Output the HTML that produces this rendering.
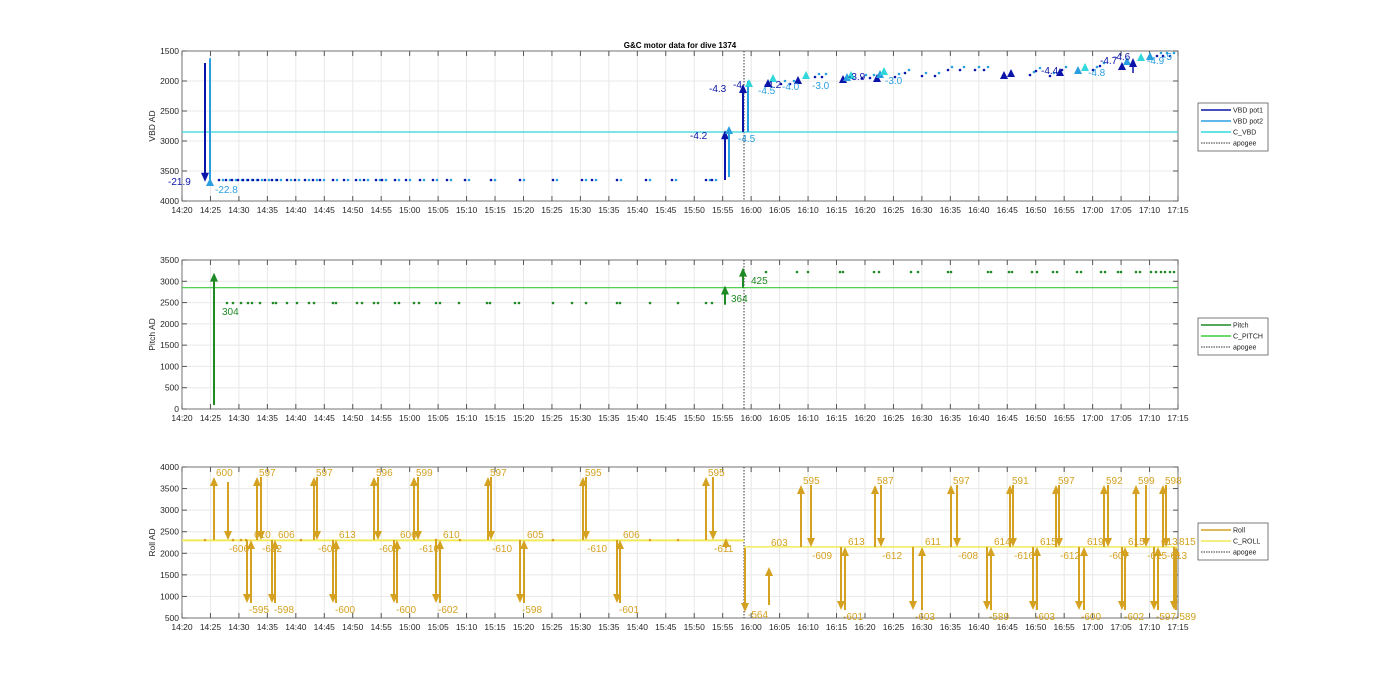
<!DOCTYPE html>
<html><head><meta charset="utf-8"><style>
html,body{margin:0;padding:0;background:#fff;width:1400px;height:693px;overflow:hidden}
svg{display:block;font-family:"Liberation Sans",Arial,sans-serif}
</style></head><body>
<svg id="s" width="1400" height="693" viewBox="0 0 1400 693" xmlns="http://www.w3.org/2000/svg">
<text x="680" y="48" font-size="8" font-weight="bold" text-anchor="middle" fill="#000">G&amp;C motor data for dive 1374</text>
</svg>
<script>
(function(){
const S=document.getElementById('s');const NS='http://www.w3.org/2000/svg';
function el(t,a,txt){const e=document.createElementNS(NS,t);for(const k in a)e.setAttribute(k,a[k]);if(txt!==undefined)e.textContent=txt;S.appendChild(e);return e;}
const X0=182,X1=1178;
const xt=m=>X0+m*(X1-X0)/175;
const labs=[];for(let m=0;m<=175;m+=5){const h=14+Math.floor((20+m)/60),mm=(20+m)%60;labs.push(h+':'+(mm<10?'0':'')+mm);}
function axes(tp,bt,ymin,ymax,step,ylab,rev){
  const yv=v=>rev?tp+(v-ymin)*(bt-tp)/(ymax-ymin):bt-(v-ymin)*(bt-tp)/(ymax-ymin);
  for(let m=0;m<=175;m+=5){const x=xt(m);el('line',{x1:x,y1:tp,x2:x,y2:bt,stroke:'#e8e8e8','stroke-width':1});}
  for(let v=ymin;v<=ymax;v+=step){const y=yv(v);el('line',{x1:X0,y1:y,x2:X1,y2:y,stroke:'#e8e8e8','stroke-width':1});
    el('text',{x:X0-3,y:y+3,'font-size':8.5,'text-anchor':'end',fill:'#262626'},String(v));
    el('line',{x1:X0,y1:y,x2:X0+5,y2:y,stroke:'#555'});el('line',{x1:X1,y1:y,x2:X1-5,y2:y,stroke:'#555'});}
  labs.forEach((l,i)=>{const x=xt(i*5);el('text',{x:x,y:bt+12,'font-size':8.5,'text-anchor':'middle',fill:'#262626'},l);
    el('line',{x1:x,y1:bt,x2:x,y2:bt-5,stroke:'#555'});el('line',{x1:x,y1:tp,x2:x,y2:tp+5,stroke:'#555'});});
  el('rect',{x:X0,y:tp,width:X1-X0,height:bt-tp,fill:'none',stroke:'#555','stroke-width':0.8});
  const cy=(tp+bt)/2;el('text',{x:0,y:0,'font-size':8.5,'text-anchor':'middle',fill:'#262626',transform:`translate(${X0-27},${cy}) rotate(-90)`},ylab);
  el('line',{x1:744,y1:tp,x2:744,y2:bt,stroke:'#333','stroke-width':1,'stroke-dasharray':'1.5,1.5'});
  return yv;
}
function arrow(x,y1,y2,c,w){w=w||2;const d=y2<y1?-1:1;el('line',{x1:x,y1:y1,x2:x,y2:y2-d*8,stroke:c,'stroke-width':w});
  el('polygon',{points:`${x-4},${y2-d*9} ${x+4},${y2-d*9} ${x},${y2}`,fill:c});}
function txt(x,y,s,c,fs){el('text',{x:x,y:y,'font-size':fs||10,fill:c},s);}
function dot(x,y,c){el('circle',{cx:x,cy:y,r:1.3,fill:c});}
function tri(x,y,c){el('polygon',{points:`${x-4},${y+3} ${x+4},${y+3} ${x},${y-5}`,fill:c});}
function legend(y,items){const h=items.length*11+4;el('rect',{x:1198,y:y,width:70,height:h,fill:'#fff',stroke:'#444','stroke-width':0.7});
  items.forEach((it,i)=>{const yy=y+7+i*11;el('line',{x1:1201,y1:yy,x2:1231,y2:yy,stroke:it[1],'stroke-width':it[2]?1:1.5,'stroke-dasharray':it[2]?'1.5,1':'none'});
  el('text',{x:1233,y:yy+2.5,'font-size':7,fill:'#222'},it[0]);});}
// VBD
const D='#0a14a8',L='#2a9fe0',C='#30d8dc';
axes(51,201,1500,4000,500,'VBD AD',true);
const vy=v=>51+(v-1500)*150/2500;
el('line',{x1:X0,y1:vy(2850),x2:X1,y2:vy(2850),stroke:C,'stroke-width':1.2});
[219,226,232,238,243,248,253,258,265,272,277,287,295,305,313,320,333,344,356,364,376,382,395,406,420,433,447,465,491,520,553,582,592,617,646,672,706,712].forEach(x=>{dot(x,180,D);dot(x+4,180,L);});
arrow(205,vy(1700),vy(3680),D);txt(168,185,'-21.9',D);
el('line',{x1:210,y1:vy(1620),x2:210,y2:vy(3640),stroke:L,'stroke-width':2});tri(210,183,L);
txt(215,193,'-22.8',L);
arrow(725,vy(3650),vy(2820),D);txt(690,139,'-4.2',D);
el('line',{x1:729,y1:vy(3600),x2:729,y2:vy(2850),stroke:L,'stroke-width':2});tri(729,131,L);
arrow(743,vy(2850),vy(2050),D);txt(709,92,'-4.3',D);
el('line',{x1:748,y1:vy(2850),x2:748,y2:vy(2000),stroke:L,'stroke-width':2});tri(749,84,C);
txt(738,142,'-4.5',L);txt(733,88,'-4',D);
[[768,84,D],[773,79,C],[798,81,D],[806,76,C],[843,80,D],[847,78,L],[851,76,C],[877,79,D],[880,75,L],[884,72,C],[1004,76,D],[1011,74,D],[1060,73,D],[1078,71,L],[1085,68,C],[1122,67,D],[1127,62,L],[1141,58,C],[1150,57,L]].forEach(t=>tri(t[0],t[1],t[2]));
[[781,84],[790,84],[815,77],[822,77],[862,78],[870,78],[895,77],[905,73],[922,76],[935,76],[948,70],[960,70],[975,70],[984,70],[1030,75],[1036,71],[1050,76],[1062,70],[1093,70],[1100,66],[1157,56],[1163,56],[1170,56]].forEach(p=>{dot(p[0],p[1],D);dot(p[0]+4,p[1]-3,L);});
arrow(1133,73,58,D,1.5);
txt(758,94,'-4.5',L);txt(764,88,'-4.2',D);txt(782,90,'-4.0',L);txt(812,89,'-3.0',L);txt(848,80,'-3.9',D);txt(885,84,'-3.0',L);
txt(1041,74,'-4.4',D);txt(1088,76,'-4.8',L);txt(1100,64,'-4.7',D);txt(1113,60,'-4.6',D);txt(1147,64,'-4.9',L);txt(1163,60,'-5',L);
legend(103,[['VBD pot1',D],['VBD pot2',L],['C_VBD',C],['apogee','#333',1]]);
// Pitch
const G='#1f8a24',GL='#3acc3a';
axes(260,409,0,3500,500,'Pitch AD',false);
const py=v=>409-v*149/3500;
el('line',{x1:X0,y1:py(2850),x2:X1,y2:py(2850),stroke:GL,'stroke-width':1.2});
[227,233,241,248,252,260,273,276,287,297,309,314,333,336,357,362,374,378,395,399,414,419,436,440,459,487,490,515,519,553,572,586,617,620,650,678,706,712].forEach(x=>dot(x,303,G));
[766,797,808,840,843,874,879,911,918,948,951,988,991,1009,1012,1032,1037,1053,1057,1077,1081,1101,1105,1118,1121,1136,1140,1151,1156,1161,1165,1170,1174].forEach(x=>dot(x,272,G));
arrow(214,405,py(2850)-15,G);txt(222,315,'304',G);
arrow(725,py(2450),py(2900),G);txt(731,302,'364',G);
arrow(743,py(2850),py(3320),G);txt(751,284,'425',G);
legend(318,[['Pitch',G],['C_PITCH',GL],['apogee','#333',1]]);
// Roll
const R='#d4a220',RY='#f2ea5a';
axes(467,618,500,4000,500,'Roll AD',false);
const ry=v=>618-(v-500)*151/3500;
el('line',{x1:X0,y1:ry(2300),x2:744,y2:ry(2300),stroke:RY,'stroke-width':2});
el('line',{x1:744,y1:ry(2150),x2:X1,y2:ry(2150),stroke:RY,'stroke-width':1.5});
[205,233,241,246,301,436,460,553,650,678].forEach(x=>dot(x,540,R));
const pre=540,post=547,TOPY=477,BOTY=603;
const ups=[[214,228,'600','-606',pre],[257,261,'597','-612',pre],[314,317,'597','-606',pre],[374,378,'596','-606',pre],[414,418,'599','-610',pre],[488,491,'597','-610',pre],[583,586,'595','-610',pre],[706,713,'595','-611',pre],
[801,811,'595','-609',post],[875,881,'587','-612',post],[951,957,'597','-608',post],[1010,1013,'591','-616',post],[1056,1059,'597','-612',post],[1104,1108,'592','-607',post],[1136,1146,'599','-615',post],[1163,1166,'598','-613',post]];
ups.forEach(u=>{const t=(u[0]<720?TOPY:485),b=u[4];arrow(u[0],b,t,R);arrow(u[1],t+(u[0]===214?5:0),b,R);txt(u[0]+2,t-1,u[2],R);txt(u[1]+1,b+12,u[3],R);});
const downs=[[247,251,'-595','610',pre],[272,275,'-598','606',pre],[333,336,'-600','613',pre],[394,397,'-600','606',pre],[436,440,'-602','610',pre],[520,524,'-598','605',pre],[617,620,'-601','606',pre],
[841,845,'-601','613',post],[913,922,'-603','611',post],[987,991,'-589','614',post],[1033,1037,'-603','615',post],[1079,1084,'-600','619',post],[1122,1125,'-602','615',post],[1154,1158,'-597','613',post],[1174,1176,'-589','815',post]];
downs.forEach(d=>{const b=(d[0]<720?BOTY:610);arrow(d[0],d[4],b,R);arrow(d[1],b,d[4],R);txt(d[0]+2,b+10,d[2],R);txt(d[1]+3,d[4]-2,d[3],R);});
arrow(745,548,612,R);txt(748,618,'-564',R);arrow(769,605,567,R);txt(771,546,'603',R);arrow(726,548,538,R);
legend(523,[['Roll',R],['C_ROLL',RY],['apogee','#333',1]]);
})();
</script>
</body></html>
